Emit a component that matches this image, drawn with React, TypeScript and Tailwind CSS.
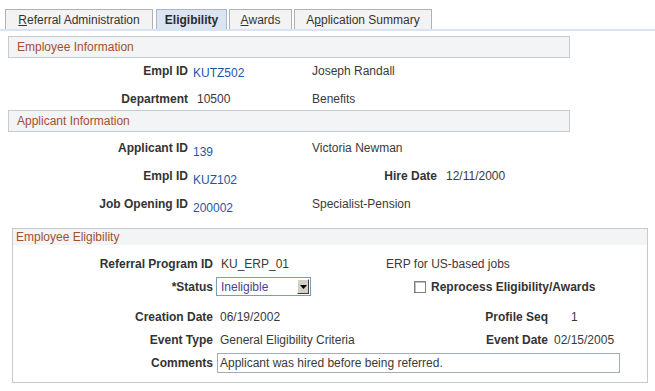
import type { ReactNode } from "react";

const tabs = [
  { key: "referral", width: "w-[148px]", label: <><span className="underline">R</span>eferral Administration</> },
  { key: "eligibility", width: "w-[71px]", label: <>Eligibility</>, active: true },
  { key: "awards", width: "w-[63px]", label: <><span className="underline">A</span>wards</> },
  { key: "summary", width: "w-[138px]", label: <>A<span className="underline">p</span>plication Summary</> }
];

function TabBar() {
  return (
    <div>
      <div className="flex items-end gap-[2px] pl-[5px] pt-[9px]">
        {tabs.map((tab) => (
          <div
            key={tab.key}
            className={
              tab.active
                ? `${tab.width} h-[20px] border border-b-0 border-[#a9b7c9] bg-[#dbe5f2] flex items-center justify-center font-bold text-[#2a2a2a] ml-[1px]`
                : `${tab.width} h-[20px] border border-b-0 border-[#b0b0b0] bg-[#f3f3f3] flex items-center justify-center text-[#333]`
            }
          >
            {tab.label}
          </div>
        ))}
      </div>
      <div className="h-[2px] bg-[#d9e4f2]" />
    </div>
  );
}

function SectionHeader({ title }: { title: string }) {
  return (
    <div className="w-[562px] h-[22px] border border-[#c5cace] bg-[#f2f4f5] flex items-center pl-[8px] text-[#a64f2c]">
      {title}
    </div>
  );
}

function InfoRow({
  label,
  value,
  link,
  drop = "pt-[8px]",
  side,
  sideLabel,
  height = "h-[28px]"
}: {
  label: string;
  value: string;
  link?: boolean;
  drop?: string;
  side?: string;
  sideLabel?: string;
  height?: string;
}) {
  return (
    <div className={`flex items-center ${height}`}>
      <span className="w-[180px] text-right font-bold text-[#333]">{label}</span>
      {link ? (
        <span className={`w-[119px] ml-[5px] text-[#1f55a8] ${drop}`}>{value}</span>
      ) : (
        <span className="w-[115px] ml-[9px] text-[#3a3a3a]">{value}</span>
      )}
      {sideLabel ? (
        <>
          <span className="w-[125px] text-right font-bold text-[#333]">{sideLabel}</span>
          <span className="ml-[9px] text-[#3a3a3a]">{side}</span>
        </>
      ) : (
        side && <span className="text-[#3a3a3a]">{side}</span>
      )}
    </div>
  );
}

function EligibilityLabel({ children }: { children: ReactNode }) {
  return <span className="w-[200px] shrink-0 text-right font-bold text-[#333]">{children}</span>;
}

function StatusSelect() {
  return (
    <div className="ml-[3px] w-[95px] h-[19px] border border-[#7f9db9] bg-white flex items-center justify-between pl-[4px] pr-[1px]">
      <span className="text-[#4b3f93]">Ineligible</span>
      <span className="w-[12px] h-[15px] bg-[#d4d0c8] border-t border-l border-t-white border-l-white border-r border-b border-r-[#404040] border-b-[#404040] flex items-center justify-center">
        <svg width="7" height="4" viewBox="0 0 7 4">
          <path d="M0 0h7L3.5 4z" fill="#000" />
        </svg>
      </span>
    </div>
  );
}

export default function App() {
  return (
    <div className="w-[655px] h-[391px] overflow-hidden bg-white text-[12px] leading-[14px] text-[#333] font-['Liberation_Sans',Arial,sans-serif]">
      <TabBar />
      <div className="px-[8px] pt-[5px]">
        <SectionHeader title="Employee Information" />
        <InfoRow label="Empl ID" value="KUTZ502" link drop="pt-[3px]" side="Joseph Randall" height="h-[26px]" />
        <div className="pt-[4px]">
          <InfoRow label="Department" value="10500" side="Benefits" height="h-[22px]" />
        </div>
        <SectionHeader title="Applicant Information" />
        <div className="pt-[2px]">
          <InfoRow label="Applicant ID" value="139" link side="Victoria Newman" />
          <InfoRow label="Empl ID" value="KUZ102" link sideLabel="Hire Date" side="12/11/2000" />
          <InfoRow label="Job Opening ID" value="200002" link side="Specialist-Pension" />
        </div>

        <div className="mt-[10px] ml-[4px] w-[636px] border border-[#c5cace] pb-[8px]">
          <div className="h-[16px] bg-[#f2f4f5] flex items-center pl-[3px] text-[#a64f2c]">Employee Eligibility</div>
          <div className="pt-[7px]">
            <div className="flex items-center h-[23px]">
              <EligibilityLabel>Referral Program ID</EligibilityLabel>
              <span className="ml-[8px] w-[165px] text-[#3a3a3a]">KU_ERP_01</span>
              <span className="text-[#3a3a3a]">ERP for US-based jobs</span>
            </div>
            <div className="flex items-center h-[23px]">
              <EligibilityLabel>*Status</EligibilityLabel>
              <StatusSelect />
              <span className="ml-[103px] w-[12px] h-[12px] border border-[#808080] bg-white shadow-[inset_1px_1px_0_#c0c0c0]" />
              <span className="ml-[5px] font-bold text-[#333]">Reprocess Eligibility/Awards</span>
            </div>
            <div className="flex items-center h-[23px] mt-[7px]">
              <EligibilityLabel>Creation Date</EligibilityLabel>
              <span className="ml-[7px] w-[258px] text-[#3a3a3a]">06/19/2002</span>
              <span className="w-[70px] text-right font-bold text-[#333]">Profile Seq</span>
              <span className="ml-[23px] text-[#3a3a3a]">1</span>
            </div>
            <div className="flex items-center h-[23px]">
              <EligibilityLabel>Event Type</EligibilityLabel>
              <span className="ml-[7px] w-[258px] text-[#3a3a3a]">General Eligibility Criteria</span>
              <span className="w-[70px] text-right font-bold text-[#333]">Event Date</span>
              <span className="ml-[6px] text-[#3a3a3a]">02/15/2005</span>
            </div>
            <div className="flex items-center h-[23px]">
              <EligibilityLabel>Comments</EligibilityLabel>
              <div className="ml-[4px] w-[403px] h-[20px] border border-[#a5acb2] flex items-center pl-[2px] text-[#3a3a3a]">
                Applicant was hired before being referred.
              </div>
            </div>
          </div>
        </div>
      </div>
    </div>
  );
}
